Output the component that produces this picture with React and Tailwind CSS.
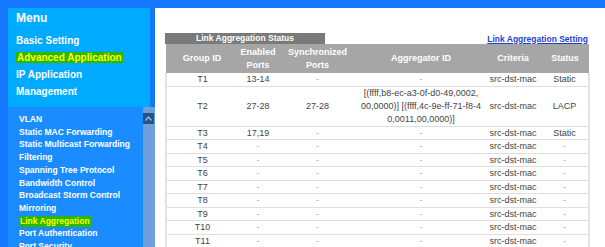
import React from "react";

const mainMenu = ["Basic Setting", "Advanced Application", "IP Application", "Management"];

const subMenu = [
  "VLAN",
  "Static MAC Forwarding",
  "Static Multicast Forwarding",
  "Filtering",
  "Spanning Tree Protocol",
  "Bandwidth Control",
  "Broadcast Storm Control",
  "Mirroring",
  "Link Aggregation",
  "Port Authentication",
  "Port Security",
];

const rows = [
  { id: "T1", enabled: "13-14", sync: "-", agg: ["-"], status: "Static" },
  {
    id: "T2",
    enabled: "27-28",
    sync: "27-28",
    agg: ["[(ffff,b8-ec-a3-0f-d0-49,0002,", "00,0000)] [(ffff,4c-9e-ff-71-f8-4", "0,0011,00,0000)]"],
    status: "LACP",
  },
  { id: "T3", enabled: "17,19", sync: "-", agg: ["-"], status: "Static" },
  { id: "T4", enabled: "-", sync: "-", agg: ["-"], status: "-" },
  { id: "T5", enabled: "-", sync: "-", agg: ["-"], status: "-" },
  { id: "T6", enabled: "-", sync: "-", agg: ["-"], status: "-" },
  { id: "T7", enabled: "-", sync: "-", agg: ["-"], status: "-" },
  { id: "T8", enabled: "-", sync: "-", agg: ["-"], status: "-" },
  { id: "T9", enabled: "-", sync: "-", agg: ["-"], status: "-" },
  { id: "T10", enabled: "-", sync: "-", agg: ["-"], status: "-" },
  { id: "T11", enabled: "-", sync: "-", agg: ["-"], status: "-" },
];

const Highlight = ({ on, children }) =>
  on ? (
    <span className="inline-block bg-[#2ab800] px-px leading-[11px] text-[#ffff00]">{children}</span>
  ) : (
    children
  );

const Cell = ({ value, className = "" }) => (
  <td className={`px-0 text-center ${value === "-" ? "text-[#aaa]" : ""} ${className}`}>{value}</td>
);

const App = () => {
  return (
    <div className="flex h-[247px] w-[605px] overflow-hidden bg-[#1478ff] font-['Liberation_Sans',Arial,sans-serif]">
      {/* left menu */}
      <aside className="flex w-[155px] shrink-0 flex-col pl-2 pt-2">
        <div className="w-[142px] bg-[#00aaff] pb-[7px] pl-2 pt-[2px] font-bold text-white">
          <div className="h-4 text-[12px] leading-4">Menu</div>
          <ul className="mt-[6px] text-[10px] leading-[17px]">
            {mainMenu.map((m) => (
              <li key={m}>
                <Highlight on={m === "Advanced Application"}>{m}</Highlight>
              </li>
            ))}
          </ul>
        </div>
        <div className="flex min-h-0 flex-1 bg-[#1a8cff]">
          <ul className="flex-1 pl-[11px] pt-[6px] text-[8.5px] font-bold leading-[12.7px] text-white">
            {subMenu.map((m) => (
              <li key={m} className="whitespace-nowrap">
                <Highlight on={m === "Link Aggregation"}>{m}</Highlight>
              </li>
            ))}
          </ul>
          <div className="w-[12px] bg-[#6f9fda] pt-[6px]">
            <div className="flex h-[11px] w-[11px] items-center justify-center bg-[#23538f]">
              <svg width="7" height="5" viewBox="0 0 7 5">
                <path d="M0.5 4.5 L3.5 1 L6.5 4.5" fill="none" stroke="#9bb8dc" strokeWidth="1.4" />
              </svg>
            </div>
          </div>
        </div>
      </aside>

      {/* content */}
      <main className="mt-2 flex-1 bg-white pl-[10px] pt-[25px]">
        <div className="flex w-[423px] items-center justify-between">
          <div className="flex h-[11px] w-[160px] items-center justify-center bg-[#7a7a7a] text-[8.5px] font-bold text-white">
            Link Aggregation Status
          </div>
          <a href="#" className="text-[8.5px] font-bold leading-[10px] text-[#1f3fcf] underline">
            Link Aggregation Setting
          </a>
        </div>
        <table className="w-[423px] table-fixed border-collapse text-[9px] text-[#444]">
          <colgroup>
            <col className="w-[72px]" />
            <col className="w-[40px]" />
            <col className="w-[79px]" />
            <col className="w-[128px]" />
            <col className="w-[56px]" />
            <col className="w-[48px]" />
          </colgroup>
          <thead>
            <tr className="h-[29px] bg-[#a6a6a6] text-[9px] font-bold leading-[13px] text-white">
              <th className="font-bold">Group ID</th>
              <th className="font-bold">
                Enabled
                <br />
                Ports
              </th>
              <th className="font-bold">
                Synchronized
                <br />
                Ports
              </th>
              <th className="font-bold">Aggregator ID</th>
              <th className="font-bold">Criteria</th>
              <th className="font-bold">Status</th>
            </tr>
          </thead>
          <tbody>
            {rows.map((r) => (
              <tr key={r.id} className="border-b border-[#dedede] leading-[12.5px]">
                <Cell value={r.id} className="h-[12.5px] border-l-2 border-l-[#e4e4e4]" />
                <Cell value={r.enabled} />
                <Cell value={r.sync} />
                <td
                  className={`whitespace-nowrap text-center ${
                    r.agg.length > 1 ? "leading-[13px]" : ""
                  } ${r.agg[0] === "-" ? "text-[#aaa]" : ""}`}
                >
                  {r.agg.map((line) => (
                    <div key={line}>{line}</div>
                  ))}
                </td>
                <Cell value="src-dst-mac" />
                <Cell value={r.status} className="border-r-2 border-r-[#e4e4e4]" />
              </tr>
            ))}
          </tbody>
        </table>
      </main>
    </div>
  );
};

export default App;
